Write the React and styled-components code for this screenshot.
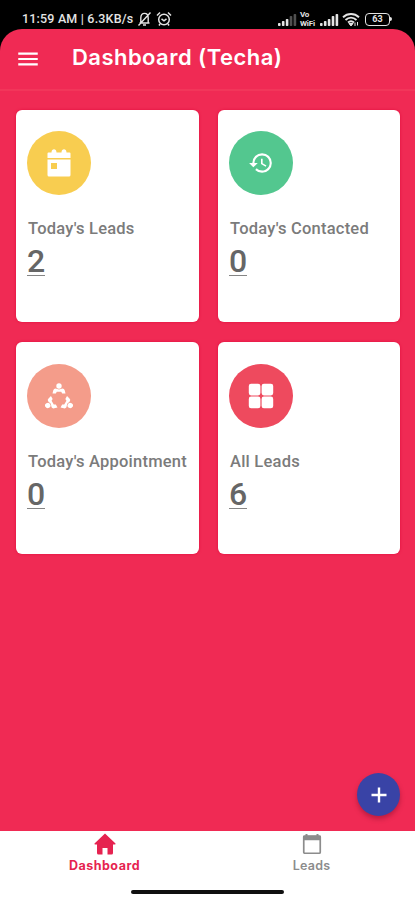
import React from 'react';
import styled, { createGlobalStyle } from 'styled-components';
import { MdHistory, MdMenu } from 'react-icons/md';

const GlobalStyle = createGlobalStyle`
  body {
    margin: 0;
    background-color: #ffffff;
  }
`;

const Screen = styled.div`
  width: 415px;
  height: 900px;
  display: flex;
  flex-direction: column;
  overflow: hidden;
  background-color: #000000;
  font-family: Roboto, sans-serif;
`;

const StatusBar = styled.div`
  flex: none;
  height: 29px;
  box-sizing: border-box;
  padding: 9px 23px 0 22px;
  display: flex;
  justify-content: space-between;
  color: #e4e4e4;
`;

const StatusGroup = styled.div`
  display: flex;
  align-items: center;
  height: 20px;
  gap: ${({ $gap }) => $gap}px;
`;

const StatusText = styled.span`
  font-size: 12.5px;
  font-weight: 500;
  line-height: 20px;
  white-space: nowrap;
  letter-spacing: 0.18px;
`;

const VoWifi = styled.span`
  display: flex;
  flex-direction: column;
  width: 17px;
  font-size: 8px;
  font-weight: 700;
  line-height: 9px;
  letter-spacing: -0.2px;
`;

const Body = styled.div`
  flex: 1;
  display: flex;
  flex-direction: column;
  background-color: #f02a54;
  border-radius: 22px 22px 0 0;
`;

const Header = styled.header`
  height: 62px;
  box-sizing: border-box;
  display: flex;
  align-items: center;
  padding: 0 0 4px 15px;
  color: #ffffff;
  border-bottom: 2px solid #f2365a;
`;

const MenuIcon = styled(MdMenu)`
  width: 26px;
  height: 26px;
  margin-top: 4px;
`;

const HeaderTitle = styled.h1`
  margin: 0 0 0 31px;
  font-family: Inter, sans-serif;
  font-size: 22px;
  font-weight: 600;
  line-height: 28px;
  letter-spacing: 0.45px;
  white-space: nowrap;
`;

const Cards = styled.main`
  flex: 1;
  display: grid;
  grid-template-columns: 183px 182px;
  grid-auto-rows: 212px;
  column-gap: 19px;
  row-gap: 20px;
  padding: 19px 0 0 16px;
`;

const CardBox = styled.section`
  display: flex;
  flex-direction: column;
  align-items: flex-start;
  box-sizing: border-box;
  padding: 21px 0 0 11px;
  border-radius: 6px;
  background-color: #ffffff;
  box-shadow: 0 0 3px #e00c3c;

  &:nth-child(n + 3) {
    padding-top: 22px;
  }
`;

const Circle = styled.div`
  width: 64px;
  height: 64px;
  display: flex;
  align-items: center;
  justify-content: center;
  border-radius: 50%;
  color: #ffffff;
  background-color: ${({ $color }) => $color};
`;

const Label = styled.span`
  margin: 23px 0 0 1px;
  font-size: 16.5px;
  font-weight: 500;
  line-height: 22px;
  letter-spacing: 0.22px;
  white-space: nowrap;
  color: #7b7b7b;
`;

const Count = styled.span`
  height: 33px;
  box-sizing: border-box;
  margin-top: 3px;
  font-size: 32px;
  font-weight: 500;
  line-height: 36px;
  color: #666666;
  border-bottom: 1px solid #858585;
`;

const FabRow = styled.div`
  display: flex;
  justify-content: flex-end;
  padding: 0 15px 15px 0;
`;

const Fab = styled.button`
  width: 43px;
  height: 43px;
  padding: 0;
  border: 0;
  border-radius: 50%;
  display: flex;
  align-items: center;
  justify-content: center;
  color: #ffffff;
  background-color: #3943a6;
  box-shadow: 0 3px 5px rgba(90, 0, 30, 0.35);
`;

const BottomBar = styled.footer`
  flex: none;
  height: 69px;
  display: flex;
  flex-direction: column;
  align-items: center;
  background-color: #ffffff;
`;

const Tabs = styled.nav`
  width: 100%;
  height: 59px;
  display: grid;
  grid-template-columns: 209px 205px;
`;

const Tab = styled.div`
  display: flex;
  flex-direction: column;
  align-items: center;
  padding-top: 2px;
  font-family: Inter, sans-serif;
  font-size: 12.5px;
  font-weight: ${({ $active }) => ($active ? 700 : 600)};
  line-height: 16px;
  letter-spacing: ${({ $active }) => ($active ? 0.5 : 0.2)}px;
  color: ${({ $active }) => ($active ? '#e62350' : '#8c8c8c')};

  svg {
    margin-bottom: 3px;
  }
`;

const HomeIndicator = styled.div`
  width: 153px;
  height: 4px;
  border-radius: 2px;
  background-color: #101010;
`;

const BellOffIcon = () => (
  <svg width="15" height="16" viewBox="0 0 14 16" fill="none" stroke="currentColor" strokeWidth="1.4">
    <path d="M2 12h10M3.300 11.500V7c0-3 1.600-4.600 3.700-4.600S10.700 4 10.700 7v4.500M5.500 14h3M1 14.500 13 1.500" />
  </svg>
);

const AlarmIcon = () => (
  <svg width="16" height="16" viewBox="0 0 16 16" fill="none" stroke="currentColor" strokeWidth="1.5">
    <circle cx="8" cy="8.500" r="5.300" />
    <path d="M1 4.500 4 1.500M15 4.500 12 1.500M5.500 7.800 8 9.800l2.500-2M4 13l-1 1.500M12 13l1 1.500" />
  </svg>
);

const SignalIcon = ({ strength }) => (
  <svg width="19" height="13" viewBox="0 0 19 13" fill="currentColor">
    {[3, 5, 7, 10, 12].map((height, i) => (
      <rect key={height} x={i * 3.9} y={13 - height} width="2.6" height={height} rx="0.8" opacity={i < strength ? 1 : 0.35} />
    ))}
  </svg>
);

const WifiIcon = () => (
  <svg width="18" height="15" viewBox="0 0 18 15" fill="none" stroke="currentColor" strokeWidth="1.9">
    <path d="M1 5.200c4.700-4.300 11.300-4.300 16 0M3.500 8c3.300-3 7.700-3 11 0M6 10.500c1.800-1.600 4.200-1.600 6 0" />
    <path d="M7 11.500h4L9 14zM13 10.500v3.500M15.500 10v3.500" fill="currentColor" strokeWidth="1" />
  </svg>
);

const Battery = styled.span`
  width: 25px;
  height: 13px;
  box-sizing: border-box;
  border: 1.5px solid #e4e4e4;
  border-radius: 4px;
  font-size: 9px;
  font-weight: 700;
  line-height: 11px;
  text-align: center;
`;

const BatteryTip = styled.span`
  width: 2px;
  height: 4px;
  border-radius: 0 2px 2px 0;
  background-color: #e4e4e4;
`;

const BatteryWrapper = styled.span`
  display: flex;
  align-items: center;
  margin-left: 2px;
`;

const CalendarIcon = () => (
  <svg width="24" height="28" viewBox="0 0 24 28" fill="currentColor">
    <path d="M1.500 3.500h3c0-4.300 5-4.300 5 0h5c0-4.300 5-4.300 5 0h3q1 0 1 1V9H.5V4.500q0-1 1-1z" />
    <path d="M.5 10.500h23V26q0 1.500-1.500 1.500H2Q.5 27.500.5 26zM4 14v6h6v-6z" fillRule="evenodd" />
  </svg>
);

// one seated person repeated around the middle of the table
const MeetingIcon = () => (
  <svg width="28" height="28" viewBox="0 0 28 28" fill="currentColor">
    {[0, 120, 240].map(angle => (
      <g key={angle} transform={`rotate(${angle} 14 17)`}>
        <circle cx="14" cy="4" r="2.7" />
        <path d="M7.500 11.500 8.300 8.200Q8.800 6.400 10.500 6.400L14 7.500 17.500 6.400Q19.200 6.400 19.700 8.200L20.500 11.500H17.200L16.200 9.700H11.800L10.800 11.500z" />
      </g>
    ))}
  </svg>
);

const GridIcon = () => (
  <svg width="26" height="26" viewBox="0 0 26 26" fill="currentColor">
    <rect x="0.8" y="0.8" width="11.600" height="11.600" rx="2.3" />
    <rect x="13.6" y="0.8" width="11.600" height="11.600" rx="2.3" />
    <rect x="0.8" y="13.600" width="11.600" height="11.600" rx="2.3" />
    <rect x="13.6" y="13.600" width="11.600" height="11.600" rx="2.3" />
  </svg>
);

const PlusIcon = () => (
  <svg width="16" height="16" viewBox="0 0 16 16" stroke="currentColor" strokeWidth="2.4">
    <path d="M8 .5v15M.5 8h15" />
  </svg>
);

const HomeIcon = () => (
  <svg width="22" height="22" viewBox="0 0 22 22" fill="currentColor">
    <path d="M11 .5 21.500 10.500q.5 1-.8 1H19V20q0 1.500-1.500 1.500h-4V15h-5v6.500h-4Q3 21.500 3 20v-8.500H1.300q-1.300 0-.8-1z" />
  </svg>
);

const LeadsIcon = () => (
  <svg width="20" height="22" viewBox="0 0 20 22" fill="none" stroke="currentColor">
    <rect x="1.75" y="3" width="16.500" height="17.250" rx="1" strokeWidth="1.7" />
    <path d="M1 5h18" strokeWidth="4.5" />
    <path d="M4.500 1v3M15.500 1v3" strokeWidth="2" />
  </svg>
);

const cards = [
  { label: "Today's Leads", count: 2, color: '#f8cd50', icon: <CalendarIcon /> },
  { label: "Today's Contacted", count: 0, color: '#53c78f', icon: <MdHistory size={26} /> },
  { label: "Today's Appointment", count: 0, color: '#f49c8a', icon: <MeetingIcon /> },
  { label: 'All Leads', count: 6, color: '#ee4a5e', icon: <GridIcon /> },
];

const App = () => {
  return (
    <Screen>
      <GlobalStyle />
      <StatusBar>
        <StatusGroup $gap={4}>
          <StatusText>11:59 AM | 6.3KB/s</StatusText>
          <BellOffIcon />
          <AlarmIcon />
        </StatusGroup>
        <StatusGroup $gap={3}>
          <SignalIcon strength={3} />
          <VoWifi>
            <span>Vo</span>
            <span>WiFi</span>
          </VoWifi>
          <SignalIcon strength={5} />
          <WifiIcon />
          <BatteryWrapper>
            <Battery>63</Battery>
            <BatteryTip />
          </BatteryWrapper>
        </StatusGroup>
      </StatusBar>
      <Body>
        <Header>
          <MenuIcon />
          <HeaderTitle>Dashboard (Techa)</HeaderTitle>
        </Header>
        <Cards>
          {cards.map(({ label, count, color, icon }) => (
            <CardBox key={label}>
              <Circle $color={color}>{icon}</Circle>
              <Label>{label}</Label>
              <Count>{count}</Count>
            </CardBox>
          ))}
        </Cards>
        <FabRow>
          <Fab>
            <PlusIcon />
          </Fab>
        </FabRow>
      </Body>
      <BottomBar>
        <Tabs>
          <Tab $active>
            <HomeIcon />
            Dashboard
          </Tab>
          <Tab>
            <LeadsIcon />
            Leads
          </Tab>
        </Tabs>
        <HomeIndicator />
      </BottomBar>
    </Screen>
  );
};

export default App;
